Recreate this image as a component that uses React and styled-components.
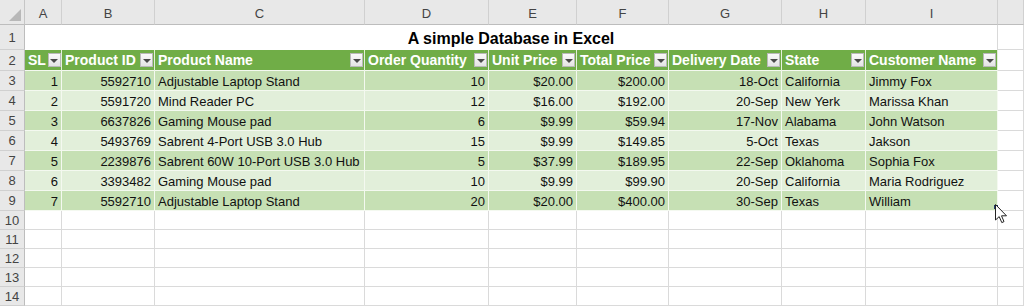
import React from 'react'
import styled, { createGlobalStyle } from 'styled-components'

const GlobalStyle = createGlobalStyle`
  html, body {
    margin: 0;
    padding: 0;
    background: #fff;
  }
  body {
    font-family: "Liberation Sans", Arial, sans-serif;
    overflow: hidden;
  }
`

const widths = [25, 37, 93, 210, 124, 88, 92, 113, 84, 132]

const Sheet = styled.div`
  position: relative;
  display: grid;
  grid-template-columns: ${widths.map((w) => `${w}px`).join(' ')} 1fr;
  grid-template-rows: 25px 25px 21px repeat(7, 20px) repeat(5, 19px);
  width: 1024px;
  height: 306px;
  overflow: hidden;
  font-size: 13px;
  color: #111;
`

const Corner = styled.div`
  position: relative;
  background: #e8e8e8;
  border-right: 1px solid #c6c6c6;
  border-bottom: 1px solid #bdbdbd;
  box-sizing: border-box;
  &:after {
    content: "";
    position: absolute;
    right: 3px;
    bottom: 3px;
    width: 0;
    height: 0;
    border-left: 12px solid transparent;
    border-bottom: 12px solid #b8b8b8;
  }
`

const ColHead = styled.div`
  display: flex;
  align-items: center;
  justify-content: center;
  background: #e8e8e8;
  border-right: 1px solid #d0d0d0;
  border-bottom: 1px solid #bdbdbd;
  box-sizing: border-box;
  color: #444;
  font-size: 13px;
  padding-top: 2px;
`

const RowHead = styled.div`
  display: flex;
  align-items: center;
  justify-content: center;
  background: #e8e8e8;
  border-right: 1px solid #bdbdbd;
  border-bottom: 1px solid #d0d0d0;
  box-sizing: border-box;
  color: #444;
  font-size: 13px;
`

const Title = styled.div`
  grid-column: 2 / span 9;
  display: flex;
  align-items: center;
  justify-content: center;
  background: #fff;
  border-right: 1px solid #d9d9d9;
  box-sizing: border-box;
  font-size: 16px;
  font-weight: bold;
  color: #000;
  padding-top: 2px;
`

const Cell = styled.div`
  display: flex;
  align-items: center;
  justify-content: ${({ $align }) => ($align === 'right' ? 'flex-end' : 'flex-start')};
  padding: 1px 3px 0;
  box-sizing: border-box;
  white-space: nowrap;
  overflow: hidden;
  background: ${({ $band }) => ($band === 'dark' ? '#c6e0b4' : $band === 'light' ? '#e2efda' : '#fff')};
  border-right: 1px solid ${({ $band }) => ($band ? '#f4f9f0' : '#dadada')};
  border-bottom: 1px solid ${({ $band }) => ($band ? '#f4f9f0' : '#dadada')};
`

const HeadCell = styled.div`
  display: flex;
  align-items: center;
  justify-content: space-between;
  gap: 2px;
  padding: 0 1px 0 3px;
  box-sizing: border-box;
  white-space: nowrap;
  overflow: hidden;
  background: #70ad47;
  color: #fff;
  font-weight: bold;
  font-size: 14px;
  border-right: 1px solid #e4f0dc;
  border-bottom: 1px solid #f4f9f0;
`

const FilterButton = styled.span`
  flex: none;
  display: flex;
  align-items: center;
  justify-content: center;
  width: 13px;
  height: 14px;
  box-sizing: border-box;
  background: linear-gradient(#fafafa, #e4e4e4);
  border: 1px solid #b9b9b9;
  &:before {
    content: "";
    width: 0;
    height: 0;
    border-left: 4px solid transparent;
    border-right: 4px solid transparent;
    border-top: 4px solid #4a4a4a;
    margin-top: 1px;
  }
`

const ResizeMark = styled.div`
  position: absolute;
  left: 994px;
  top: 205px;
  width: 4px;
  height: 4px;
  background: #1f3a6b;
`

const Cursor = styled.svg`
  position: absolute;
  left: 995px;
  top: 204px;
  pointer-events: none;
`

const letters = ['A', 'B', 'C', 'D', 'E', 'F', 'G', 'H', 'I', '']

const headers = ['SL', 'Product ID', 'Product Name', 'Order Quantity', 'Unit Price', 'Total Price', 'Delivery Date', 'State', 'Customer Name']

// which columns are right aligned in the data rows
const rightCols = [true, true, false, true, true, true, true, false, false]

const rows = [
  ['1', '5592710', 'Adjustable Laptop Stand', '10', '$20.00', '$200.00', '18-Oct', 'California', 'Jimmy Fox'],
  ['2', '5591720', 'Mind Reader PC', '12', '$16.00', '$192.00', '20-Sep', 'New Yerk', 'Marissa Khan'],
  ['3', '6637826', 'Gaming Mouse pad', '6', '$9.99', '$59.94', '17-Nov', 'Alabama', 'John Watson'],
  ['4', '5493769', 'Sabrent 4-Port USB 3.0 Hub', '15', '$9.99', '$149.85', '5-Oct', 'Texas', 'Jakson'],
  ['5', '2239876', 'Sabrent 60W 10-Port USB 3.0 Hub', '5', '$37.99', '$189.95', '22-Sep', 'Oklahoma', 'Sophia Fox'],
  ['6', '3393482', 'Gaming Mouse pad', '10', '$9.99', '$99.90', '20-Sep', 'California', 'Maria Rodriguez'],
  ['7', '5592710', 'Adjustable Laptop Stand', '20', '$20.00', '$400.00', '30-Sep', 'Texas', 'William'],
]

const emptyRows = [10, 11, 12, 13, 14]

export default function App() {
  return (
    <>
      <GlobalStyle />
      <Sheet>
        <Corner />
        {letters.map((l, i) => <ColHead key={'c' + i}>{l}</ColHead>)}

        <RowHead>1</RowHead>
        <Title>A simple Database in Excel</Title>
        <Cell />

        <RowHead>2</RowHead>
        {headers.map((h) => (
          <HeadCell key={h}>
            <span>{h}</span>
            <FilterButton />
          </HeadCell>
        ))}
        <Cell />

        {rows.map((row, r) => (
          <React.Fragment key={'r' + r}>
            <RowHead>{r + 3}</RowHead>
            {row.map((v, c) => (
              <Cell key={c} $band={r % 2 === 0 ? 'dark' : 'light'} $align={rightCols[c] ? 'right' : 'left'}>
                {v}
              </Cell>
            ))}
            <Cell />
          </React.Fragment>
        ))}

        {emptyRows.map((n) => (
          <React.Fragment key={'e' + n}>
            <RowHead>{n}</RowHead>
            {letters.map((l, i) => <Cell key={i} />)}
          </React.Fragment>
        ))}

        <ResizeMark />
        <Cursor width="13" height="20" viewBox="0 0 13 20">
          <path d="M0.5 0.5 L0.5 16 L4.2 12.6 L6.8 18.6 L9 17.6 L6.5 11.8 L11.5 11.8 Z" fill="#fff" stroke="#222" strokeWidth="1" strokeLinejoin="round" />
        </Cursor>
      </Sheet>
    </>
  )
}
